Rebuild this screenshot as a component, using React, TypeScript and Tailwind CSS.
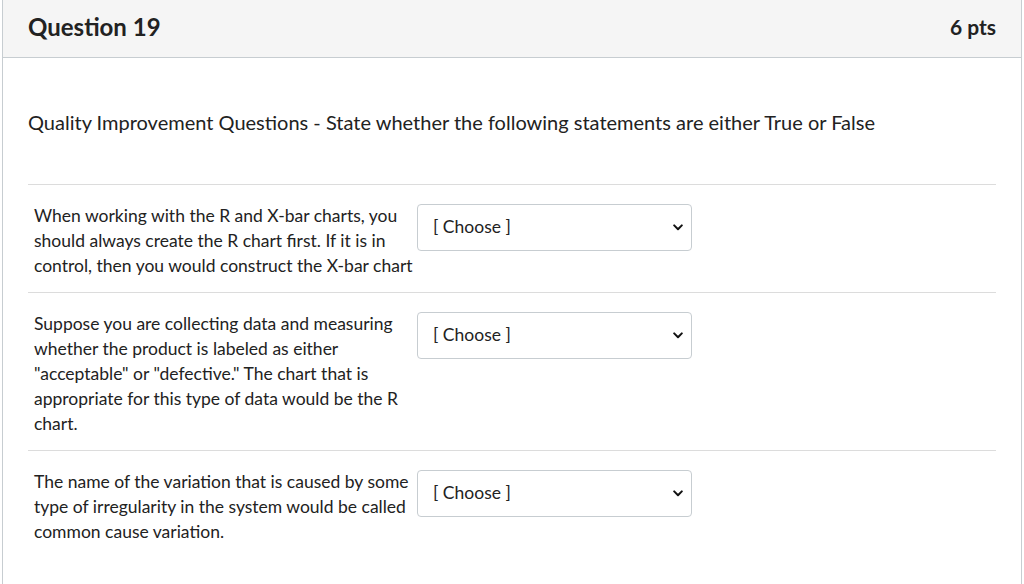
import React from "react";

const items = [
  "When working with the R and X-bar charts, you should always create the R chart first. If it is in control, then you would construct the X-bar chart",
  "Suppose you are collecting data and measuring whether the product is labeled as either \"acceptable\" or \"defective.\" The chart that is appropriate for this type of data would be the R chart.",
  "The name of the variation that is caused by some type of irregularity in the system would be called common cause variation.",
];

function ChooseSelect() {
  return (
    <div className="ml-[3px] flex h-[47px] w-[275px] shrink-0 items-center justify-between rounded-[4px] border border-[#c7cdd1] bg-white pl-[15px] pr-[8px] text-[17.5px] text-[#222]">
      <span>[ Choose ]</span>
      <svg width="10" height="7" viewBox="0 0 10 7" fill="none">
        <path d="M1.2 1.4 L5 5.2 L8.8 1.4" stroke="#111" strokeWidth="2" strokeLinecap="round" strokeLinejoin="round" />
      </svg>
    </div>
  );
}

export default function App() {
  return (
    <div
      className="h-[584px] w-[1024px] overflow-hidden bg-white px-[2px] text-[#222]"
      style={{ fontFamily: "Lato, 'Open Sans', sans-serif" }}
    >
      <div className="h-full border-x border-[#c7cdd1]">
        <div className="flex h-[58px] items-center justify-between border-b border-[#c7cdd1] bg-[#f5f5f5] pl-[25px] pr-[25px] pb-[4px]">
          <h2 className="text-[24px] font-bold">Question 19</h2>
          <span className="text-[21px] font-bold">6 pts</span>
        </div>
        <div className="px-[25px]">
          <p className="pt-[50px] pb-[48px] text-[20px] leading-[28px]">
            Quality Improvement Questions - State whether the following statements are either True or False
          </p>
          {items.map((t, i) => (
            <div key={i} className="flex items-start border-t border-[#dcdcdc] pl-[6px] pt-[18px] pb-[14px]">
              <p className="w-[380px] text-[17.5px] leading-[25px]">{t}</p>
              <div className="pt-[1px]">
                <ChooseSelect />
              </div>
            </div>
          ))}
        </div>
      </div>
    </div>
  );
}
